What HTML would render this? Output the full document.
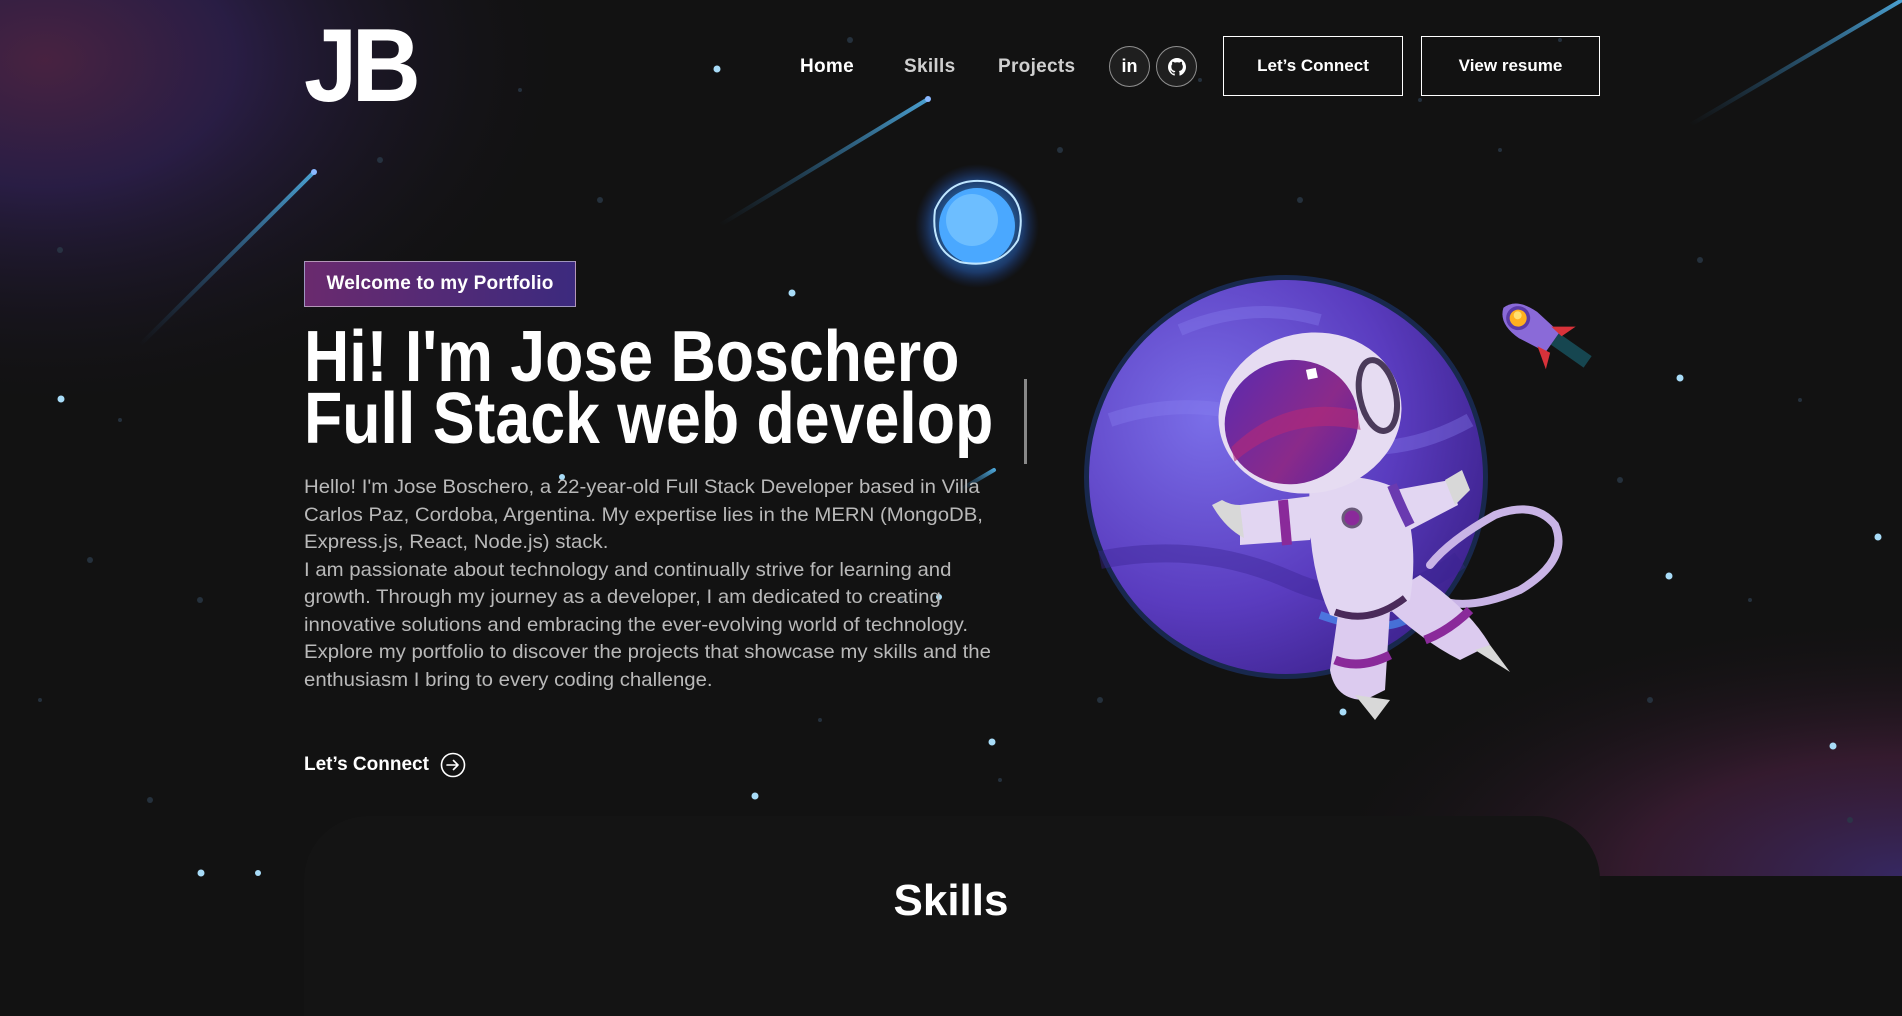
<!DOCTYPE html>
<html><head><meta charset="utf-8">
<style>
*{margin:0;padding:0;box-sizing:border-box}
html,body{width:1902px;height:950px;overflow:hidden;background:#121212;font-family:"Liberation Sans",sans-serif;color:#fff}
#bg{position:absolute;left:0;top:0}
.abs{position:absolute}
.logo{left:304px;top:14px;font-size:104px;font-weight:bold;letter-spacing:-6px;transform:scaleX(0.92);transform-origin:left;line-height:1}
.nav{top:56px;font-size:19px;font-weight:bold;letter-spacing:0.3px}
.ic{top:46px;width:41px;height:41px;border:1px solid rgba(255,255,255,.5);border-radius:50%;background:rgba(255,255,255,.06);display:flex;align-items:center;justify-content:center}
.btn{top:36px;height:60px;border:1.5px solid #fff;display:flex;align-items:center;justify-content:center;font-size:17px;font-weight:bold}
.badge{left:304px;top:261px;width:272px;height:46px;border:1px solid rgba(255,255,255,.5);background:linear-gradient(90deg,#6a2a6e,#3c2a7e);font-size:19px;font-weight:bold;display:flex;align-items:center;justify-content:center;letter-spacing:.2px}
.h1{left:304px;top:326px;font-size:72px;font-weight:bold;line-height:62px;transform:scaleX(0.87);transform-origin:left top;white-space:nowrap}
.cur{left:1024px;top:379px;width:3px;height:85px;background:#888}
.p{left:304px;top:474px;font-size:19.4px;line-height:27.5px;color:#b9b9b9;white-space:nowrap;transform:scaleX(1.05);transform-origin:left top}
.lc{left:304px;top:752px;font-size:19px;font-weight:bold;display:flex;align-items:center;gap:11px}
.card{left:304px;top:816px;width:1296px;height:200px;background:#141414;border-radius:64px 64px 0 0}
.sk{left:0;width:1902px;top:876px;text-align:center;font-size:44px;font-weight:bold}
</style></head><body>
<svg id="bg" width="1902" height="950" viewBox="0 0 1902 950">
<defs>
<radialGradient id="g1" cx="0.05" cy="0.1" r="0.6"><stop offset="0" stop-color="#5a2850" stop-opacity=".75"/><stop offset=".35" stop-color="#33225a" stop-opacity=".7"/><stop offset="1" stop-color="#121212" stop-opacity="0"/></radialGradient>
<radialGradient id="g2" cx="1" cy="1" r="0.75"><stop offset="0" stop-color="#3a2a6a" stop-opacity=".9"/><stop offset=".45" stop-color="#4a2040" stop-opacity=".6"/><stop offset="1" stop-color="#121212" stop-opacity="0"/></radialGradient>
<radialGradient id="pl" cx="0.3" cy="0.35" r="0.8"><stop offset="0" stop-color="#7a6ee8"/><stop offset=".6" stop-color="#5a3cbf"/><stop offset="1" stop-color="#3b208a"/></radialGradient>
<radialGradient id="orb" cx=".5" cy=".5" r=".5"><stop offset="0" stop-color="#7fd0ff"/><stop offset=".5" stop-color="#3aa0ff"/><stop offset=".75" stop-color="#2a70e0" stop-opacity=".7"/><stop offset="1" stop-color="#1a40a0" stop-opacity="0"/></radialGradient>
<linearGradient id="vis" x1="0" y1="0" x2="1" y2="1"><stop offset="0" stop-color="#5a2ab0"/><stop offset=".6" stop-color="#8a2a8a"/><stop offset="1" stop-color="#5a24a0"/></linearGradient>
<linearGradient id="met" x1="0" y1="1" x2="1" y2="0"><stop offset="0" stop-color="#2a6a9a" stop-opacity="0"/><stop offset="1" stop-color="#4aa0d0"/></linearGradient>
</defs>
<rect width="1902" height="950" fill="#121212"/>
<rect width="900" height="600" fill="url(#g1)"/>
<rect x="1100" y="520" width="802" height="356" fill="url(#g2)"/>
<g fill="#2a3a48" opacity=".8">
<circle cx="60" cy="250" r="3"/><circle cx="120" cy="420" r="2"/><circle cx="200" cy="600" r="3"/><circle cx="40" cy="700" r="2"/><circle cx="380" cy="160" r="3"/><circle cx="520" cy="90" r="2"/><circle cx="600" cy="200" r="3"/><circle cx="700" cy="340" r="2"/><circle cx="1060" cy="150" r="3"/><circle cx="1200" cy="80" r="2"/><circle cx="1300" cy="200" r="3"/><circle cx="1700" cy="260" r="3"/><circle cx="1800" cy="400" r="2"/><circle cx="1650" cy="700" r="3"/><circle cx="1750" cy="600" r="2"/><circle cx="900" cy="600" r="3"/><circle cx="1000" cy="780" r="2"/><circle cx="150" cy="800" r="3"/><circle cx="820" cy="720" r="2"/><circle cx="1100" cy="700" r="3"/><circle cx="1500" cy="150" r="2"/><circle cx="1850" cy="820" r="3"/><circle cx="90" cy="560" r="3"/><circle cx="1620" cy="480" r="3"/><circle cx="1560" cy="40" r="2"/><circle cx="1420" cy="100" r="2"/><circle cx="850" cy="40" r="3"/>
</g>
<g stroke="url(#met)" stroke-width="4" stroke-linecap="round">
<line x1="140" y1="345" x2="314" y2="172"/><line x1="720" y1="225" x2="928" y2="99"/><line x1="1690" y1="125" x2="1902" y2="0"/><line x1="960" y1="490" x2="994" y2="470"/>
</g>
<circle cx="314" cy="172" r="3" fill="#8ab8ff"/><circle cx="928" cy="99" r="3" fill="#8ab8ff"/>
<g fill="#a8dcf8">
<circle cx="717" cy="69" r="3.5"/><circle cx="792" cy="293" r="3.5"/><circle cx="61" cy="399" r="3.5"/><circle cx="1680" cy="378" r="3.5"/><circle cx="1878" cy="537" r="3.5"/><circle cx="1669" cy="576" r="3.5"/><circle cx="992" cy="742" r="3.5"/><circle cx="755" cy="796" r="3.5"/><circle cx="1833" cy="746" r="3.5"/><circle cx="201" cy="873" r="3.5"/><circle cx="258" cy="873" r="3"/><circle cx="939" cy="597" r="3"/><circle cx="562" cy="477" r="3"/><circle cx="1343" cy="712" r="3.5"/>
</g>
<circle cx="977" cy="226" r="62" fill="url(#orb)" opacity=".6"/>
<circle cx="977" cy="226" r="38" fill="#4aa8ff"/>
<circle cx="972" cy="220" r="26" fill="#7cc8ff" opacity=".7"/>
<path d="M935 210 Q950 175 990 182 Q1030 195 1018 240 Q1000 270 960 262 Q930 250 935 210Z" fill="none" stroke="#bfe6ff" stroke-width="2"/>
<circle cx="1286" cy="477" r="202" fill="#2a6aff" opacity=".25"/>
<circle cx="1286" cy="477" r="197" fill="url(#pl)"/>
<path d="M1110 420 Q1200 390 1290 430 T1470 420" stroke="#8a80f0" stroke-width="14" fill="none" opacity=".35"/>
<path d="M1100 560 Q1200 540 1290 580 T1460 560" stroke="#3a2490" stroke-width="18" fill="none" opacity=".4"/>
<path d="M1180 330 Q1250 300 1320 320" stroke="#8a80f0" stroke-width="12" fill="none" opacity=".35"/>
<path d="M1320 615 Q1390 640 1420 610" stroke="#4aa0ff" stroke-width="8" fill="none" opacity=".6"/>
<g transform="translate(1528,325) rotate(35)">
<path d="M30 -4 L70 -4" stroke="#1a6a7a" stroke-width="14" opacity=".6"/>
<path d="M-30 0 Q-25 -16 0 -16 L30 -12 L30 12 L0 16 Q-25 16 -30 0Z" fill="#8a6ad8"/>
<path d="M20 -12 L40 -26 L34 -10Z M20 12 L40 26 L34 10Z" fill="#d8323a"/>
<circle cx="-12" cy="0" r="12" fill="#5a3aa8"/><circle cx="-12" cy="0" r="8.5" fill="#ffb020"/><circle cx="-14" cy="-2" r="4" fill="#ffe070"/>
</g>
<path d="M1413 585 Q1450 620 1520 590 Q1570 560 1555 525 Q1535 500 1495 515 Q1450 540 1430 565" fill="none" stroke="#c9b4e6" stroke-width="8" stroke-linecap="round"/>
<path d="M1340 600 L1330 670 Q1335 700 1365 700 L1385 690 L1390 610Z" fill="#dccbef"/>
<path d="M1335 660 Q1360 670 1390 655" stroke="#8a2a9a" stroke-width="9" fill="none"/>
<path d="M1380 600 Q1420 640 1460 660 L1490 645 Q1470 610 1420 575Z" fill="#dccbef"/>
<path d="M1425 640 Q1450 630 1470 610" stroke="#8a2a9a" stroke-width="9" fill="none"/>
<path d="M1355 695 L1375 720 L1390 700Z" fill="#d8d8d8"/>
<path d="M1475 650 L1510 672 L1490 645Z" fill="#d8d8d8"/>
<path d="M1310 480 Q1360 470 1400 490 Q1420 540 1410 600 Q1370 630 1330 615 Q1305 560 1310 480Z" fill="#e2d6f2"/>
<path d="M1335 612 Q1370 625 1405 598" stroke="#4a2a5a" stroke-width="7" fill="none"/>
<circle cx="1352" cy="518" r="9" fill="#8a2a9a" stroke="#6a5a7a" stroke-width="3"/>
<path d="M1320 495 L1240 505 L1240 545 L1310 540Z" fill="#e2d6f2"/>
<path d="M1283 500 L1287 545" stroke="#8a2a9a" stroke-width="10"/>
<path d="M1222 500 Q1230 505 1240 505 L1244 538 Q1225 528 1212 505Z" fill="#d8d8d8"/>
<path d="M1395 490 L1450 480 L1458 505 L1410 530Z" fill="#e2d6f2"/>
<path d="M1392 485 Q1400 505 1410 525" stroke="#6a3ab0" stroke-width="10" fill="none"/>
<path d="M1445 480 L1462 470 L1470 490 L1455 505Z" fill="#d8d8d8"/>
<g transform="rotate(-12 1310 413)">
<ellipse cx="1310" cy="413" rx="92" ry="80" fill="#e6dcf2"/>
<ellipse cx="1290" cy="418" rx="67" ry="62" fill="url(#vis)"/>
<path d="M1226 430 Q1290 390 1356 420 L1356 440 Q1290 410 1226 445Z" fill="#b42a78" opacity=".6"/>
<ellipse cx="1380" cy="410" rx="18" ry="36" fill="none" stroke="#4a3a5a" stroke-width="6"/>
<rect x="1315" y="370" width="10" height="10" fill="#fff"/>
</g>
</svg>

<div class="abs logo">JB</div>
<div class="abs nav" style="left:800px">Home</div>
<div class="abs nav" style="left:904px;color:#cfcfcf">Skills</div>
<div class="abs nav" style="left:998px;color:#cfcfcf">Projects</div>
<div class="abs ic" style="left:1109px;font-weight:bold;font-size:18px">in</div>
<div class="abs ic" style="left:1156px"><svg width="18" height="18" viewBox="0 0 16 16"><path fill="#fff" d="M8 0C3.6 0 0 3.6 0 8c0 3.5 2.3 6.5 5.5 7.6.4.1.5-.2.5-.4v-1.4c-2.2.5-2.7-1-2.7-1-.4-.9-.9-1.2-.9-1.2-.7-.5.1-.5.1-.5.8.1 1.2.8 1.2.8.7 1.3 1.9.9 2.4.7.1-.5.3-.9.5-1.1-1.8-.2-3.6-.9-3.6-4 0-.9.3-1.6.8-2.1-.1-.2-.4-1 .1-2.1 0 0 .7-.2 2.2.8.6-.2 1.3-.3 2-.3s1.4.1 2 .3c1.5-1 2.2-.8 2.2-.8.4 1.1.2 1.9.1 2.1.5.6.8 1.3.8 2.1 0 3.1-1.9 3.8-3.6 4 .3.3.6.8.6 1.5v2.2c0 .2.1.5.6.4C13.7 14.5 16 11.5 16 8c0-4.4-3.6-8-8-8z"/></svg></div>
<div class="abs btn" style="left:1223px;width:180px">Let’s Connect</div>
<div class="abs btn" style="left:1421px;width:179px">View resume</div>

<div class="abs badge">Welcome to my Portfolio</div>
<div class="abs h1">Hi! I'm Jose Boschero<br>Full Stack web develop</div>
<div class="abs cur"></div>
<div class="abs p">Hello! I'm Jose Boschero, a 22-year-old Full Stack Developer based in Villa<br>Carlos Paz, Cordoba, Argentina. My expertise lies in the MERN (MongoDB,<br>Express.js, React, Node.js) stack.<br>I am passionate about technology and continually strive for learning and<br>growth. Through my journey as a developer, I am dedicated to creating<br>innovative solutions and embracing the ever-evolving world of technology.<br>Explore my portfolio to discover the projects that showcase my skills and the<br>enthusiasm I bring to every coding challenge.</div>
<div class="abs lc">Let’s Connect <svg width="26" height="26" viewBox="0 0 26 26"><circle cx="13" cy="13" r="11.5" fill="none" stroke="#fff" stroke-width="1.6"/><path d="M7 13h11M13.5 8.5L18 13l-4.5 4.5" fill="none" stroke="#fff" stroke-width="1.6" stroke-linecap="round" stroke-linejoin="round"/></svg></div>
<div class="abs card"></div>
<div class="abs sk">Skills</div>
</body></html>
